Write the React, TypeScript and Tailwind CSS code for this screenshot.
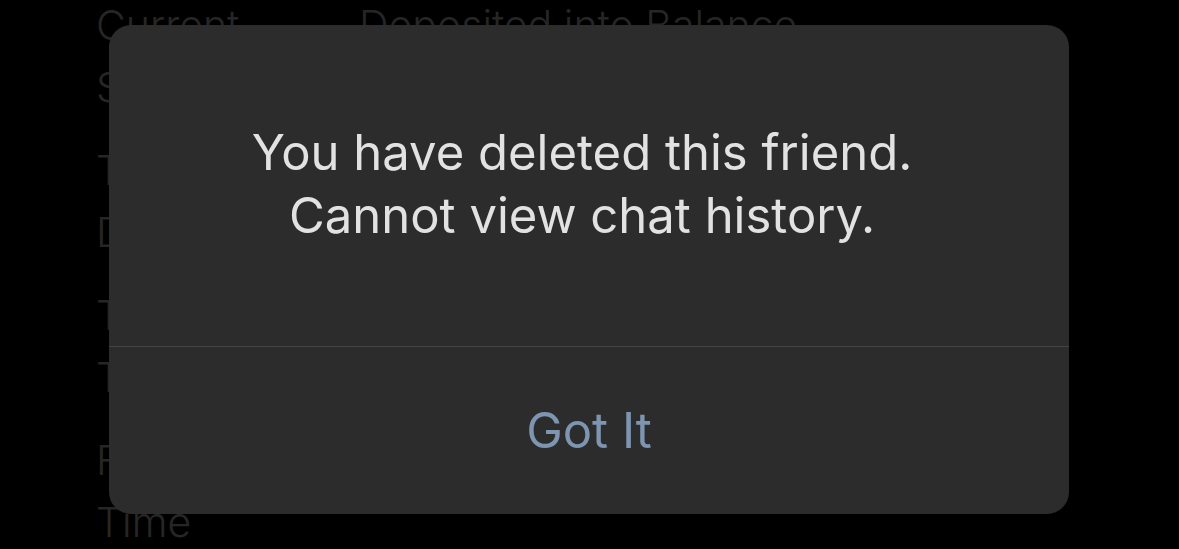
const rows = [
  ["Current", "Deposited into Balance"],
  ["Status", ""],
  ["Transfer", ""],
  ["Details", ""],
  ["Transfer", ""],
  ["Time", ""],
  ["Fund Arrival", ""],
  ["Time", ""],
];

const App = () => {
  return (
    <div
      className="relative w-[1179px] h-[549px] overflow-hidden bg-black"
      style={{ fontFamily: "Inter, 'Noto Sans', sans-serif" }}
    >
      {/* faded list behind the alert */}
      <div className="pl-[96px] pt-[1px] text-[41px] font-light text-[#262626] leading-[48px]">
        {rows.map(([label, value], i) => (
          <div
            key={i}
            className={`flex ${i % 2 === 0 && i > 0 ? "mt-[35px]" : i > 0 ? "mt-[14px]" : ""}`}
          >
            <span className="w-[263px]">{label}</span>
            <span>{value}</span>
          </div>
        ))}
      </div>

      <div className="absolute left-[109px] top-[25px] w-[960px] h-[489px] rounded-[22px] bg-[#2c2c2c] flex flex-col overflow-hidden">
        <div className="h-[321px] flex items-center justify-center text-center text-[49px] leading-[63px] text-[#e2e2e2] pb-[4px] pr-[14px]">
          <p>
            You have deleted this friend.
            <br />
            Cannot view chat history.
          </p>
        </div>
        <div className="h-px bg-[#444444]" />
        <button className="flex-1 flex items-center justify-center text-[49px] text-[#7d95b0]">
          Got It
        </button>
      </div>
    </div>
  );
};

export default App;
